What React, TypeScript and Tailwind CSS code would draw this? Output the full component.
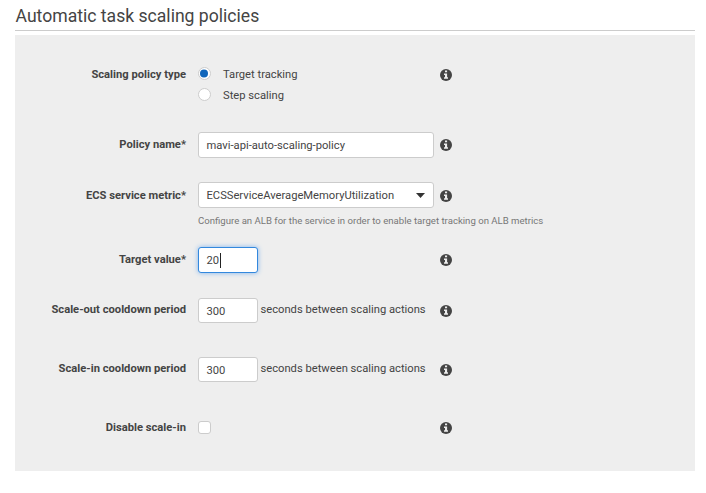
import React from "react";

function Info() {
  return (
    <svg className="h-3 w-3 shrink-0" viewBox="0 0 12 12">
      <circle cx="6" cy="6" r="6" fill="#444" />
      <path d="M5 1.5h2.1v1.8H5zM4 4.5h3.1v3.7H8v1.6H4V8.2h1V6H4z" fill="#eee" />
    </svg>
  );
}

type RowProps = { label: string; height: string; labelTop: string; infoTop: string; children: React.ReactNode };

function Row({ label, height, labelTop, infoTop, children }: RowProps) {
  return (
    <div className={"flex items-start " + height}>
      <div className={"w-[171px] shrink-0 text-right font-bold leading-4 " + labelTop}>{label}</div>
      <div className="ml-3 w-[242px] shrink-0 whitespace-nowrap">{children}</div>
      <div className={infoTop}><Info /></div>
    </div>
  );
}

const box = "flex items-center rounded-[3px] border border-[#ccc] bg-white px-[7.5px]";

function Cooldown() {
  return (
    <div className="flex gap-[2.5px]">
      <div className={box + " h-[25px] w-[60px] pt-[3px]"}>300</div>
      <span className="mt-1 leading-4">seconds between scaling actions</span>
    </div>
  );
}

function Radio({ checked }: { checked?: boolean }) {
  return (
    <svg className="h-[13px] w-[13px]" viewBox="0 0 13 13">
      <circle cx="6.5" cy="6.5" r="6" fill="#fff" stroke="#ccc" />
      {checked && <circle cx="6" cy="6.5" r="4" fill="#1166bb" />}
    </svg>
  );
}

export default function App() {
  return (
    <div className="h-[493px] w-[706px] overflow-hidden bg-white px-[15px] font-['Roboto',sans-serif] text-[11.2px] text-[#444]">
      <h1 className="h-[31px] w-[680px] border-b border-[#ccc] pl-[0.5px] pt-1 text-[17.6px] leading-6">Automatic task scaling policies</h1>
      <main className="mt-1 h-[436px] w-[680px] bg-[#eee] pt-8">
        <Row label="Scaling policy type" height="h-[65px]" labelTop="" infoTop="mt-[1.5px]">
          <div className="flex gap-3"><Radio checked /><span className="leading-4">Target tracking</span></div>
          <div className="mt-[5px] flex gap-3"><Radio /><span className="leading-4">Step scaling</span></div>
        </Row>
        <Row label="Policy name*" height="h-[50px]" labelTop="mt-[5px]" infoTop="mt-[7px]">
          <div className={box + " h-[26px] w-[236px] pt-[3px]"}>mavi-api-auto-scaling-policy</div>
        </Row>
        <Row label="ECS service metric*" height="h-[65px]" labelTop="mt-[6px]" infoTop="mt-[7.5px]">
          <div className={box + " h-[26px] w-[236px] justify-between"}>
            <span className="pt-[2px]">ECSServiceAverageMemoryUtilization</span>
            <svg className="mr-px h-[5px] w-[9px]" viewBox="0 0 9 5"><path d="M0 0h9L4.5 5z" fill="#333" /></svg>
          </div>
          <p className="mt-[7px] text-[9.6px] leading-3 text-[#777]">Configure an ALB for the service in order to enable target tracking on ALB metrics</p>
        </Row>
        <Row label="Target value*" height="h-[51px]" labelTop="mt-[5px]" infoTop="mt-[6.5px]">
          <div className="flex h-[26px] w-[60px] items-center rounded-[3px] border border-[#3388dd] bg-white px-[7.5px] pt-[3px] shadow-[0_0_5px_#7fb4ee]">
            20<span className="-mt-[3px] ml-px h-[15px] w-px bg-[#222]" />
          </div>
        </Row>
        <Row label="Scale-out cooldown period" height="h-[59px]" labelTop="mt-1" infoTop="mt-[6.5px]"><Cooldown /></Row>
        <Row label="Scale-in cooldown period" height="h-[59px]" labelTop="mt-1" infoTop="mt-[6.5px]"><Cooldown /></Row>
        <Row label="Disable scale-in" height="h-[20px]" labelTop="mt-1" infoTop="mt-[6px]">
          <div className="mt-[5px] h-[13px] w-[13px] rounded-[3px] border border-[#ccc] bg-white" />
        </Row>
      </main>
    </div>
  );
}
